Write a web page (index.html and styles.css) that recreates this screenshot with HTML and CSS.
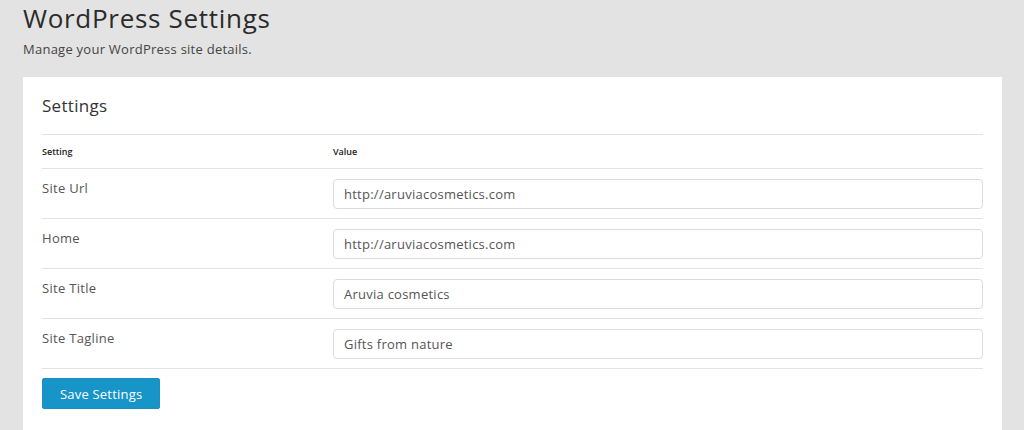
FILE: index.html
```html
<!DOCTYPE html>
<html lang="en">
<head>
  <meta charset="UTF-8" />
  <title>WordPress Settings</title>
  <link rel="stylesheet" href="styles.css">
</head>
<body>
  <div class="page">
    <h1 class="page-title">WordPress Settings</h1>
    <p class="page-sub">Manage your WordPress site details.</p>

    <div class="card">
      <h2 class="card-title">Settings</h2>
      <table class="settings-table">
        <thead>
          <tr>
            <th class="col-setting">Setting</th>
            <th>Value</th>
          </tr>
        </thead>
        <tbody>
          <tr>
            <td class="label">Site Url</td>
            <td><input class="field" type="text" value="http://aruviacosmetics.com"></td>
          </tr>
          <tr>
            <td class="label">Home</td>
            <td><input class="field" type="text" value="http://aruviacosmetics.com"></td>
          </tr>
          <tr>
            <td class="label">Site Title</td>
            <td><input class="field" type="text" value="Aruvia cosmetics"></td>
          </tr>
          <tr>
            <td class="label">Site Tagline</td>
            <td><input class="field" type="text" value="Gifts from nature"></td>
          </tr>
        </tbody>
      </table>
      <button class="btn-save">Save Settings</button>
    </div>
  </div>
</body>
</html>
```

FILE: styles.css
```css
body {
  margin: 0;
  background: #e3e3e3;
  font-family: 'Open Sans', sans-serif;
  color: #333;
}
.page {
  padding: 2px 22px 0 23px;
}
.page-title {
  margin: 0;
  font-size: 26px;
  font-weight: 400;
  letter-spacing: 0.7px;
  color: #2b2b2b;
  line-height: 32px;
}
.page-sub {
  margin: 6px 0 0;
  font-size: 13px;
  letter-spacing: 0.25px;
  color: #444;
  line-height: 18px;
}
.card {
  background: #fff;
  margin-top: 19px;
  padding: 16px 19px 30px;
  height: 340px;
}
.card-title {
  margin: 0 0 15px;
  font-size: 17px;
  font-weight: 400;
  letter-spacing: 0.3px;
  color: #333;
  line-height: 26px;
}
.settings-table {
  width: 100%;
  border-collapse: collapse;
}
.settings-table th {
  text-align: left;
  font-size: 9px;
  font-weight: 600;
  color: #222;
  padding: 0;
  height: 33px;
  border-top: 1px solid #e3e3e3;
  border-bottom: 1px solid #e3e3e3;
}
.col-setting {
  width: 291px;
}
.settings-table td {
  border-bottom: 1px solid #e3e3e3;
  padding: 10px 0 9px;
  vertical-align: top;
  font-size: 13px;
  letter-spacing: 0.3px;
  color: #555;
}
.label {
  padding-top: 10px !important;
}
.field {
  display: block;
  width: 100%;
  box-sizing: border-box;
  height: 30px;
  padding: 0 10px;
  border: 1px solid #dcdcdc;
  border-radius: 4px;
  font-family: inherit;
  font-size: 13px;
  letter-spacing: 0.25px;
  color: #555;
}
.btn-save {
  margin-top: 9px;
  height: 31px;
  padding: 0 17px;
  background: #1795c9;
  color: #fff;
  border: 1px solid #1a8fc0;
  border-radius: 2px;
  font-family: inherit;
  font-size: 13px;
  letter-spacing: 0.2px;
}
```
